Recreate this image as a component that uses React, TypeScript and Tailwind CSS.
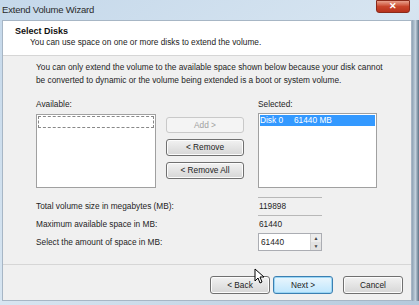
import React from "react";

const font = { fontFamily: '"Liberation Sans", Arial, sans-serif' };

function Btn({ label, disabled, primary, className }: { label: string; disabled?: boolean; primary?: boolean; className?: string }) {
  return (
    <div
      className={[
        "flex items-center justify-center rounded-[3px] border text-[8.3px]",
        disabled
          ? "border-[#c9c9c9] bg-[#f4f4f4] text-[#a0a0a0]"
          : primary
          ? "border-[#3c7fb1] bg-gradient-to-b from-[#eaf6fd] to-[#bee6fd] text-[#222] shadow-[inset_0_0_0_1px_#9ad6f5]"
          : "border-[#707070] bg-gradient-to-b from-[#f2f2f2] to-[#d6d6d6] text-[#222] shadow-[inset_0_0_0_1px_#fcfcfc]",
        className ?? "",
      ].join(" ")}
    >
      {label}
    </div>
  );
}

export default function App() {
  return (
    <div style={font} className="w-[419px] h-[305px] flex flex-col bg-gradient-to-br from-[#c5d8ea] via-[#d7e5f1] to-[#b4c9dc] overflow-hidden text-[#1e1e1e]">
      {/* title bar */}
      <div className="h-[20px] flex items-start">
        <span className="pl-[2px] pt-[3px] text-[9.5px] text-[#2a2a2a] tracking-[-0.2px]">Extend Volume Wizard</span>
        <div className="ml-auto mr-[9px] w-[34px] h-[13px] rounded-b-[3px] bg-gradient-to-b from-[#e8a08c] via-[#c9452b] to-[#b8321c] border border-[#8a2a1a] flex items-center justify-center text-white text-[9px] font-bold">
          ✕
        </div>
      </div>

      <div className="flex flex-1">
        <div className="w-[2px]" />
        <div className="flex-1 bg-[#f0f0f0] flex flex-col border border-[#a7b6c5]">
          {/* header */}
          <div className="h-[35px] bg-white border-b border-[#d6d6d6] pl-[12px] pt-[5px] shrink-0">
            <div className="text-[9px] font-bold text-[#111] leading-[11px]">Select Disks</div>
            <div className="pl-[15px] text-[8.3px] leading-[11px] text-[#222]">You can use space on one or more disks to extend the volume.</div>
          </div>

          {/* body */}
          <div className="h-[209px] shrink-0 pl-[33px] pt-[5px] border-b border-[#d6d6d6] text-[8.3px]">
            <p className="leading-[13px] w-[360px]">
              You can only extend the volume to the available space shown below because your disk cannot
              <br />
              be converted to dynamic or the volume being extended is a boot or system volume.
            </p>

            <div className="flex mt-[12px]">
              <div className="flex flex-col w-[120px]">
                <span className="leading-[11px]">Available:</span>
                <div className="mt-[4px] h-[74px] bg-white border border-[#a0a0a0] p-[1px]">
                  <div className="h-[12px] border border-dashed border-[#888]" />
                </div>
              </div>

              <div className="flex flex-col gap-[6px] ml-[10px] mt-[18px] w-[78px]">
                <Btn label="Add >" disabled className="h-[16px]" />
                <Btn label="< Remove" className="h-[17px]" />
                <Btn label="< Remove All" className="h-[17px]" />
              </div>

              <div className="flex flex-col w-[119px] ml-[14px]">
                <span className="leading-[11px]">Selected:</span>
                <div className="mt-[3px] h-[75px] bg-white border border-[#a0a0a0] p-[1px]">
                  <div className="h-[11px] bg-[#3399ff] text-white leading-[11px] flex">
                    <span className="w-[30px]">Disk 0</span>
                    <span className="ml-[4px]">61440 MB</span>
                  </div>
                </div>
              </div>
            </div>

            <div className="mt-[9px] flex flex-col">
              <div className="flex items-center h-[18px]">
                <span className="w-[222px]">Total volume size in megabytes (MB):</span>
                <span className="w-[64px] h-[16px] border-t border-[#b8b8b8] pl-[1px] leading-[16px] mt-[-2px]">119898</span>
              </div>
              <div className="flex items-center h-[18px]">
                <span className="w-[222px]">Maximum available space in MB:</span>
                <span className="w-[64px] h-[16px] border-t border-[#b8b8b8] pl-[1px] leading-[16px] mt-[-2px]">61440</span>
              </div>
              <div className="flex items-center h-[18px]">
                <span className="w-[222px]">Select the amount of space in MB:</span>
                <div className="w-[64px] h-[18px] bg-white border border-[#abadb3] flex">
                  <span className="flex-1 pl-[2px] leading-[16px]">61440</span>
                  <div className="w-[11px] flex flex-col border-l border-[#d0d0d0]">
                    <div className="flex-1 bg-[#ececec] text-[5px] leading-[8px] text-center text-[#444]">▲</div>
                    <div className="flex-1 bg-[#e2e2e2] text-[5px] leading-[8px] text-center text-[#444]">▼</div>
                  </div>
                </div>
              </div>
            </div>
          </div>

          {/* footer */}
          <div className="flex-1 flex items-start pt-[11px] pr-[8px] relative">
            <div className="ml-auto flex">
              <Btn label="< Back" className="w-[60px] h-[18px]" />
              <Btn label="Next >" primary className="w-[60px] h-[18px] ml-[3px]" />
              <Btn label="Cancel" className="w-[60px] h-[18px] ml-[10px]" />
            </div>
            <svg className="absolute left-[251px] top-[3px]" width="10" height="16" viewBox="0 0 10 16">
              <path d="M1 1 L1 13 L4 10 L6 15 L8 14 L6 9 L10 9 Z" fill="white" stroke="black" strokeWidth="1" />
            </svg>
          </div>
        </div>
        <div className="w-[7px] bg-gradient-to-r from-[#8ea2b4] via-[#c2d0dc] to-[#5d7286]" />
      </div>
      <div className="h-[4px]" />
    </div>
  );
}
